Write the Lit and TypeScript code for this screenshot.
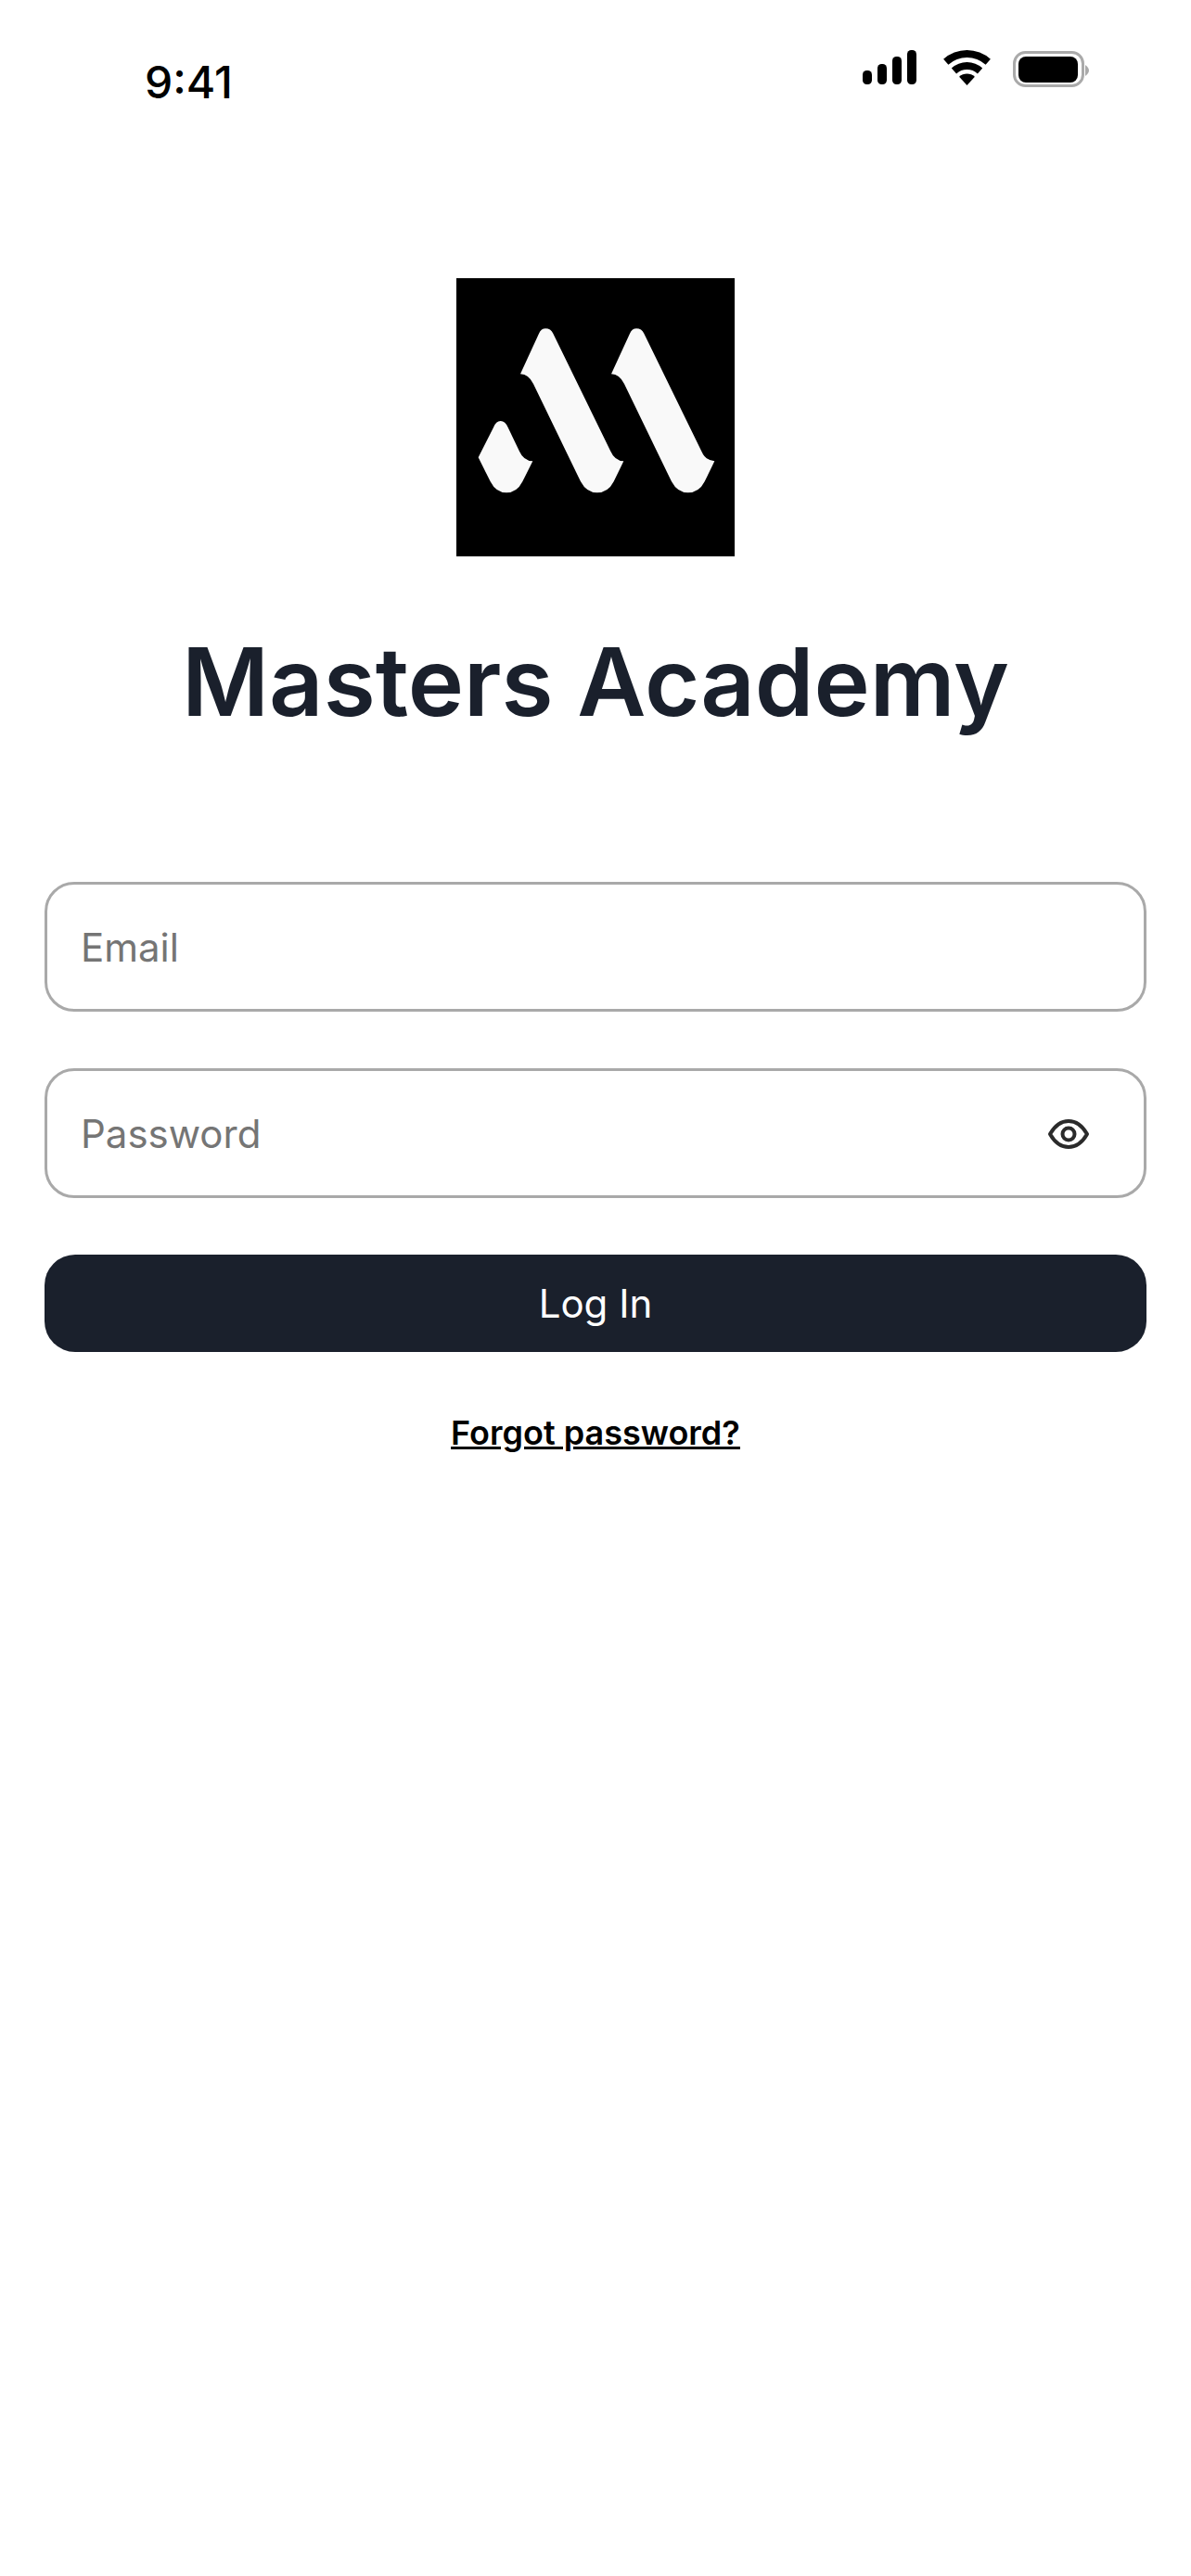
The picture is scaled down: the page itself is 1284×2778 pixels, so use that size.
import { LitElement, html, css } from "lit";
import { customElement } from "lit/decorators.js";

@customElement("app-root")
export class AppRoot extends LitElement {
  static styles = css`
    :host {
      display: block;
      width: 1284px;
      height: 2778px;
      background: #fff;
      font-family: Inter, "Liberation Sans", sans-serif;
      overflow: hidden;
    }
    .status {
      display: flex;
      justify-content: space-between;
      height: 120px;
      padding-left: 156px;
      padding-right: 110px;
      box-sizing: border-box;
    }
    .time {
      font-size: 48px;
      font-weight: 500;
      line-height: 56px;
      margin-top: 61px;
      color: #000;
    }
    .sys {
      display: block;
      margin-top: 50px;
    }
    .main {
      display: flex;
      flex-direction: column;
      align-items: center;
      padding: 180px 48px 0;
    }
    .logo {
      display: block;
      width: 300px;
      height: 300px;
    }
    h1 {
      margin: 70px 0 0;
      font-size: 102px;
      font-weight: 600;
      line-height: 130px;
      color: #1a202c;
      letter-spacing: 0;
    }
    .form {
      width: 100%;
      display: flex;
      flex-direction: column;
      margin-top: 151px;
      gap: 61px;
    }
    .field {
      display: flex;
      align-items: center;
      height: 140px;
      box-sizing: border-box;
      border: 3px solid #a9a9a9;
      border-radius: 32px;
      padding: 0 36px;
      background: #fff;
    }
    input {
      flex: 1;
      min-width: 0;
      border: none;
      outline: none;
      background: transparent;
      padding: 0;
      font: 400 42px Inter, "Liberation Sans", sans-serif;
      color: #1a202c;
    }
    input::placeholder {
      color: #757575;
      opacity: 1;
    }
    .eye {
      display: block;
      flex: none;
      margin: 2px 21px 0 0;
    }
    button {
      height: 105px;
      border: none;
      border-radius: 33px;
      background: #1a202c;
      color: #fff;
      font: 400 42px Inter, "Liberation Sans", sans-serif;
      padding: 0;
    }
    .forgot {
      margin-top: 64px;
      font-size: 36px;
      font-weight: 600;
      line-height: 46px;
      color: #000;
      text-decoration: underline;
    }
  `;

  render() {
    return html`
      <div class="status">
        <div class="time">9:41</div>
        <svg class="sys" width="246" height="46" viewBox="928 50 246 46">
          <rect x="930" y="76" width="10" height="15" rx="4.500" fill="#000" />
          <rect x="946" y="69" width="10" height="22" rx="4.500" fill="#000" />
          <rect x="962" y="61" width="10" height="30" rx="4.500" fill="#000" />
          <rect x="978" y="54" width="10" height="37" rx="4.500" fill="#000" />
          <path d="M1017.100 63.800 A38 38 0 0 1 1067.900 63.800 L1062.600 69.700 A30 30 0 0 0 1022.400 69.700 Z" fill="#000" />
          <path d="M1025.800 73.400 A25 25 0 0 1 1059.200 73.400 L1053.900 79.400 A17 17 0 0 0 1031.100 79.400 Z" fill="#000" />
          <path d="M1034.100 82.700 A12.500 12.500 0 0 1 1050.900 82.700 L1042.500 92 Z" fill="#000" />
          <rect x="1093.500" y="56.500" width="74" height="36" rx="12" fill="none" stroke="#aaa" stroke-width="3" />
          <rect x="1098" y="61" width="64" height="28" rx="8" fill="#000" />
          <path d="M1170 70 Q1174 73 1174 76 Q1174 79 1170 82 Z" fill="#aaa" />
        </svg>
      </div>
      <div class="main">
        <svg class="logo" viewBox="36 30 900 900">
          <rect x="36" y="30" width="900" height="900" fill="#000" />
          <path
            fill="#f9f9f9"
            d="M107 610 L156 513 Q164 492 179 492 Q194 492 203 513 L240 590 Q253 620 283 622 L250 688 Q232 724 198 724 Q164 724 146 688 Z"
          />
          <path
            fill="#f9f9f9"
            d="M243 340 L303 209 Q310 193 325 193 Q341 193 349 209 L535 590 Q548 620 577 622 L545 688 Q527 724 491 724 Q457 724 438 688 L285 372 Q270 341 243 340 Z"
          />
          <path
            fill="#f9f9f9"
            d="M537 340 L597 209 Q604 193 619 193 Q635 193 643 209 L829 590 Q842 620 871 622 L839 688 Q821 724 785 724 Q751 724 732 688 L579 372 Q564 341 537 340 Z"
          />
        </svg>
        <h1>Masters Academy</h1>
        <div class="form">
          <div class="field"><input type="email" placeholder="Email" /></div>
          <div class="field">
            <input type="password" placeholder="Password" />
            <svg class="eye" width="48" height="36" viewBox="1128 1205 48 36" fill="none" stroke="#2b2b2b" stroke-width="4">
              <path d="M1132 1223 Q1140 1209 1152 1209 Q1164 1209 1172 1223 Q1164 1237 1152 1237 Q1140 1237 1132 1223 Z" stroke-linejoin="round" />
              <circle cx="1152" cy="1223" r="6.500" />
            </svg>
          </div>
          <button>Log In</button>
        </div>
        <div class="forgot">Forgot password?</div>
      </div>
    `;
  }
}
